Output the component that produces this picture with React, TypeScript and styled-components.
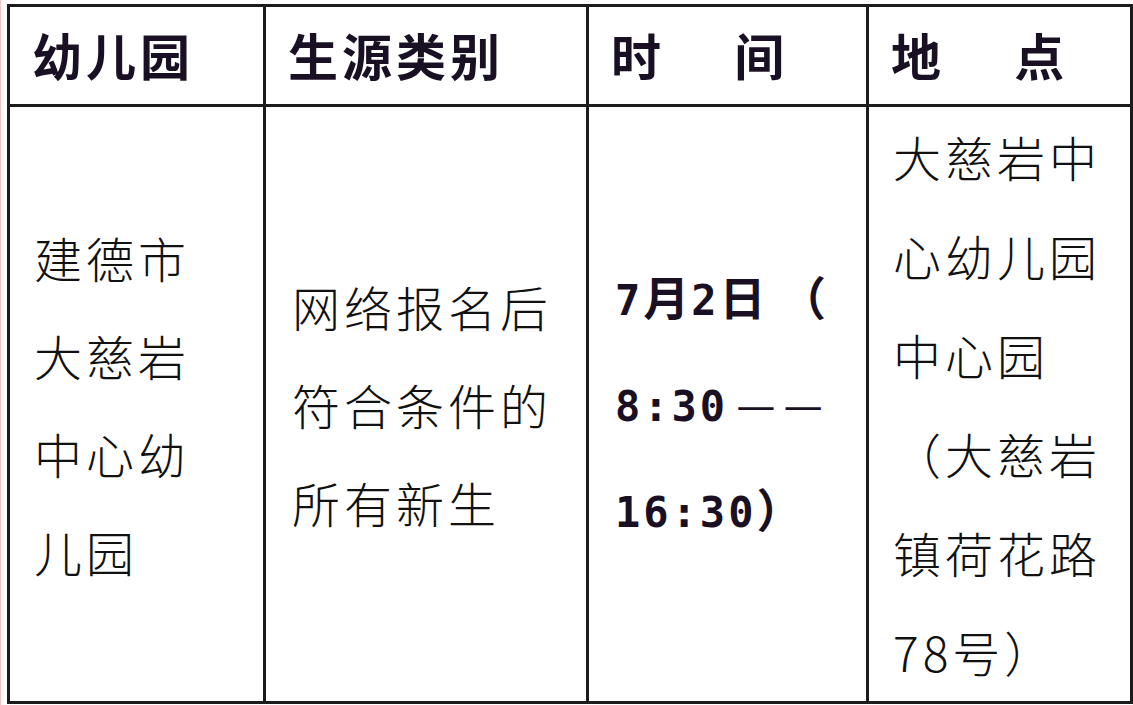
import React from 'react';
import styled, { createGlobalStyle } from 'styled-components';

const GlobalStyle = createGlobalStyle`
  html, body {
    margin: 0;
    padding: 0;
    background: #ffffff;
  }
`;

const Page = styled.div`
  width: 1133px;
  height: 705px;
  box-sizing: border-box;
  padding: 4px 4px 0 6px;
  background: #ffffff;
  border-left: 1px solid #f3c4c4;
`;

const Table = styled.table`
  width: 1123px;
  height: 696px;
  border-collapse: collapse;
  table-layout: fixed;
  font-family: "Noto Sans CJK SC", "Noto Sans", sans-serif;
  color: #111111;
`;

const HeadCell = styled.th`
  height: 100px;
  box-sizing: border-box;
  border: 3px solid #1c1c1c;
  padding: 0 0 3px 22px;
  text-align: left;
  vertical-align: middle;
  font-size: 50px;
  font-weight: 700;
  letter-spacing: 4px;
  color: #1a1024;
  white-space: pre;
`;

const BodyCell = styled.td<{ $pad?: number }>`
  border: 3px solid #1c1c1c;
  padding: 0 0 0 ${({ $pad }) => $pad ?? 24}px;
  vertical-align: middle;
  text-align: left;
`;

const Line = styled.div<{ $height?: number }>`
  font-size: 48px;
  font-weight: 300;
  letter-spacing: 4px;
  line-height: ${({ $height }) => $height ?? 98}px;
  white-space: nowrap;
`;

const TimeLine = styled.div`
  font-size: 46px;
  font-weight: 700;
  letter-spacing: 2px;
  line-height: 101px;
  white-space: nowrap;
  color: #1a1024;
`;

const Num = styled.span`
  font-family: "DejaVu Sans Mono", "Liberation Mono", monospace;
  font-size: 42px;
  font-weight: 700;
  letter-spacing: 3px;
`;

const DashText = styled.span`
  display: inline-block;
  font-size: 44px;
  font-weight: 400;
  letter-spacing: 0;
  margin-left: 8px;
`;

const App: React.FC = () => {
  const school = ['建德市', '大慈岩', '中心幼', '儿园'];
  const kind = ['网络报名后', '符合条件的', '所有新生'];
  const place = ['大慈岩中', '心幼儿园', '中心园', '（大慈岩', '镇荷花路', '78号）'];

  return (
    <>
      <GlobalStyle />
      <Page>
        <Table>
          <colgroup>
            <col style={{ width: 256 }} />
            <col style={{ width: 323 }} />
            <col style={{ width: 280 }} />
            <col style={{ width: 264 }} />
          </colgroup>
          <thead>
            <tr>
              <HeadCell>幼儿园</HeadCell>
              <HeadCell>生源类别</HeadCell>
              <HeadCell>{'时　 间'}</HeadCell>
              <HeadCell>{'地　 点'}</HeadCell>
            </tr>
          </thead>
          <tbody>
            <tr>
              <BodyCell>
                {school.map((s) => (
                  <Line key={s}>{s}</Line>
                ))}
              </BodyCell>
              <BodyCell $pad={26}>
                {kind.map((s) => (
                  <Line key={s}>{s}</Line>
                ))}
              </BodyCell>
              <BodyCell $pad={26}>
                <TimeLine>
                  <Num>7</Num>月<Num>2</Num>日 （
                </TimeLine>
                <TimeLine>
                  <Num>8:30</Num>
                  <DashText>—</DashText>
                  <DashText>—</DashText>
                </TimeLine>
                <TimeLine>
                  <Num>16:30</Num>）
                </TimeLine>
              </BodyCell>
              <BodyCell $pad={24}>
                {place.map((s) => (
                  <Line key={s} $height={99}>
                    {s}
                  </Line>
                ))}
              </BodyCell>
            </tr>
          </tbody>
        </Table>
      </Page>
    </>
  );
};

export default App;
